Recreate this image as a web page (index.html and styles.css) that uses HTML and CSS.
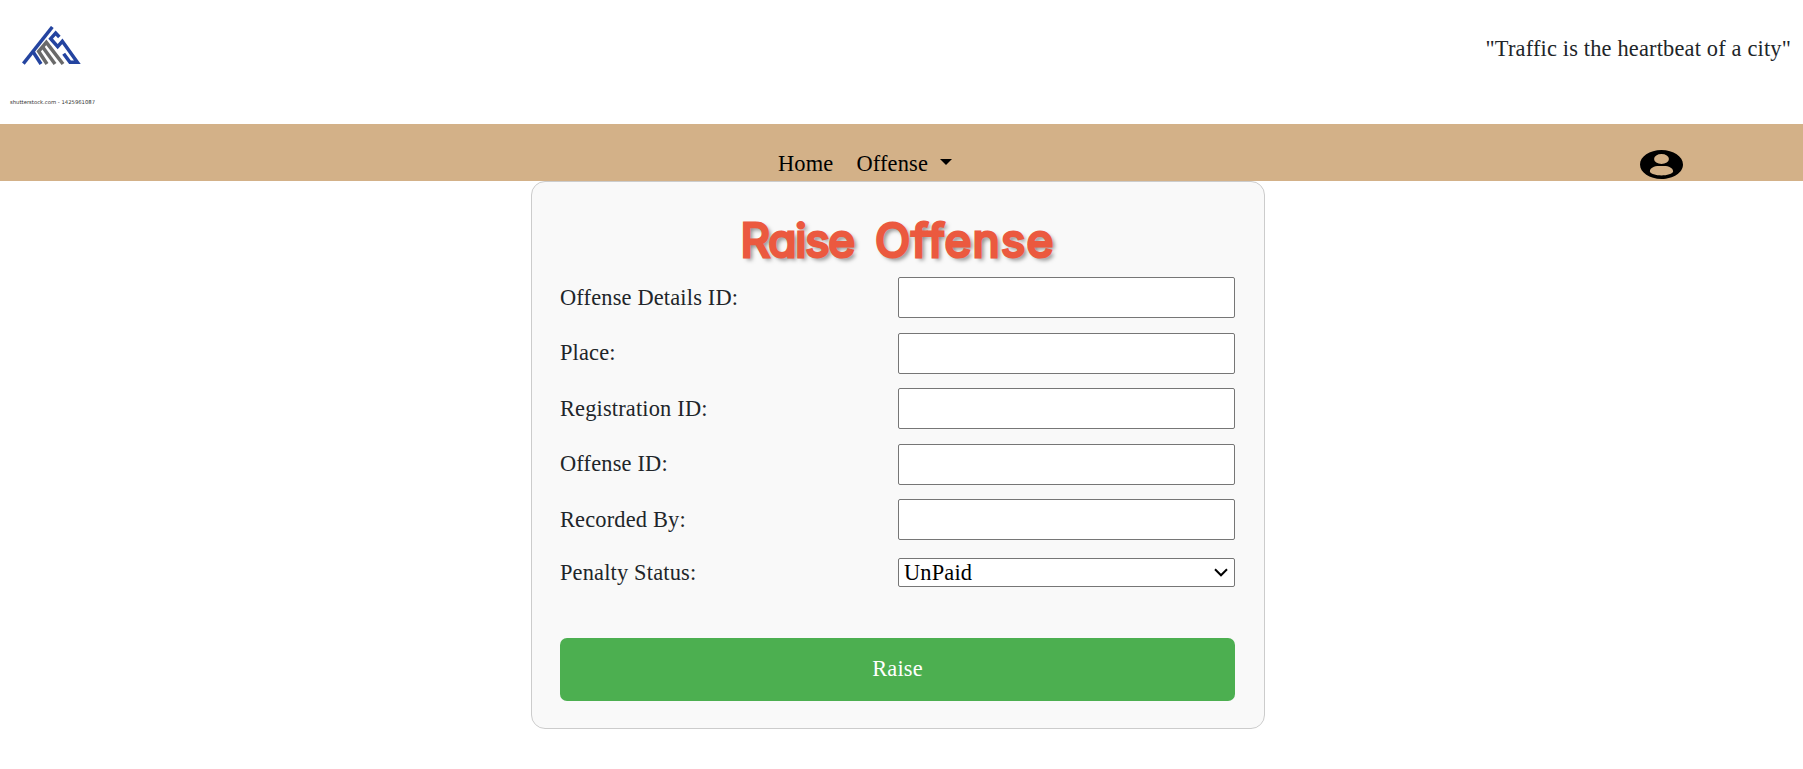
FILE: index.html
```html
<!DOCTYPE html>
<html lang="en">
<head>
<meta charset="utf-8">
<title>Raise Offense</title>
<link rel="stylesheet" href="styles.css">
</head>
<body>
<header class="header">
  <div class="brand">
    <svg class="logo" viewBox="0 0 180 120" fill="none" stroke-width="10.5">
      <g stroke="#6a6a6a">
        <path d="M75 114 L50 76 L73 49 L123 114"/>
        <path d="M99 114 L62 63"/>
      </g>
      <g stroke="#2444a0">
        <path d="M91 3 L4 113"/>
        <path d="M34 79 L57 114"/>
        <path d="M112 33 L101 21 L86 38 L107 62 L121 46 L166 109 H144 L125 83"/>
      </g>
    </svg>
    <span class="credit">shutterstock.com - 1425961087</span>
  </div>
  <p class="quote">"Traffic is the heartbeat of a city"</p>
</header>
<nav class="nav">
  <div class="links">
    <a class="link">Home</a>
    <a class="link">Offense<span class="caret"></span></a>
  </div>
  <svg class="user" viewBox="2 2 20 20" preserveAspectRatio="none"><path d="M12 2C6.480 2 2 6.480 2 12s4.480 10 10 10 10-4.480 10-10S17.520 2 12 2zm0 2.800a3.450 3.450 0 1 1 0 6.900 3.450 3.450 0 0 1 0-6.900zm0 14.700c-2.400 0-5.400-1.100-5.400-2.700 0-2.300 2-3.700 4.200-3.700h2.400c2.200 0 4.200 1.400 4.200 3.700 0 1.600-3 2.700-5.400 2.700z"/></svg>
</nav>
<main class="card">
  <h1 class="title"><span class="tight">Raise</span><span class="loose">Offense</span></h1>
  <form class="form">
    <label class="row"><span>Offense Details ID:</span><input class="field" type="text"></label>
    <label class="row"><span>Place:</span><input class="field" type="text"></label>
    <label class="row"><span>Registration ID:</span><input class="field" type="text"></label>
    <label class="row"><span>Offense ID:</span><input class="field" type="text"></label>
    <label class="row"><span>Recorded By:</span><input class="field" type="text"></label>
    <label class="row status"><span>Penalty Status:</span>
      <span class="picker"><select class="select"><option>UnPaid</option></select>
        <svg class="chevron" viewBox="0 0 14 9" fill="none" stroke="#000" stroke-width="2"><path d="M1 1.300 L7 7.300 L13 1.300"/></svg></span></label>
    <button class="submit" type="button">Raise</button>
  </form>
</main>
</body>
</html>
```
FILE: styles.css
```css
* { box-sizing: border-box; }
body {
  margin: 0;
  background: #fff;
  color: #212529;
  font: 22.4px/34px "Liberation Serif", "Times New Roman", serif;
  letter-spacing: .17px;
}
.header {
  display: flex;
  justify-content: space-between;
  height: 124px;
  padding: 26px 12px 0 10px;
}
.brand { display: flex; flex-direction: column; }
.logo { width: 60px; height: 40px; margin-left: 12px; }
.credit {
  margin-top: 31px;
  font: 5.3px/10px "DejaVu Sans", sans-serif;
  letter-spacing: 0;
  color: #333;
  white-space: nowrap;
}
.quote { margin: 6px 0 0; line-height: 34px; }
.nav {
  display: flex;
  justify-content: space-between;
  height: 57px;
  padding: 23px 120px 0 778px;
  background: #d3b188;
}
.links { display: flex; gap: 23px; color: #000; }
.link { display: flex; align-items: center; height: 34px; }
.caret {
  margin: -5px 0 0 12px;
  border: 6.5px solid transparent;
  border-top-color: #000;
  border-bottom: 0;
}
.user { width: 43px; height: 29px; margin-top: 3px; }
.card {
  width: 734px;
  height: 548px;
  margin-left: 531px;
  padding: 28px 29px 28px 28px;
  border: 1px solid #ccc;
  border-radius: 14px;
  background: #f9f9f9;
}
.title {
  display: flex;
  justify-content: center;
  gap: 21px;
  height: 67.3px;
  margin: 0;
  color: #eb593f;
  font: 400 46px/60px Inter, sans-serif;
  font-feature-settings: "cv11";
  -webkit-text-stroke: 3px #eb593f;
  text-shadow: 3px 3px 4px rgba(0, 0, 0, .5);
}
.tight { letter-spacing: -1.2px; }
.loose { letter-spacing: 1.2px; }
.form { display: flex; flex-direction: column; gap: 14px; }
.row { display: grid; grid-template-columns: 338px 337px; align-items: center; height: 41.4px; }
.field {
  width: 100%;
  height: 41px;
  border: 1px solid #767676;
  border-radius: 2px;
  background: #fff;
}
.status { height: 36.7px; }
.picker { position: relative; display: flex; }
.select {
  appearance: none;
  width: 100%;
  height: 29px;
  padding: 0 5px;
  border: 1px solid #767676;
  border-radius: 2px;
  background: #fff;
  color: #000;
  font: inherit;
  line-height: 27px;
  letter-spacing: inherit;
}
.chevron { position: absolute; top: 10px; right: 7px; width: 14px; height: 9px; }
.submit {
  height: 63px;
  margin-top: 33px;
  border: 0;
  border-radius: 7px;
  background: #4caf50;
  color: #fff;
  font: inherit;
  letter-spacing: inherit;
}
```
